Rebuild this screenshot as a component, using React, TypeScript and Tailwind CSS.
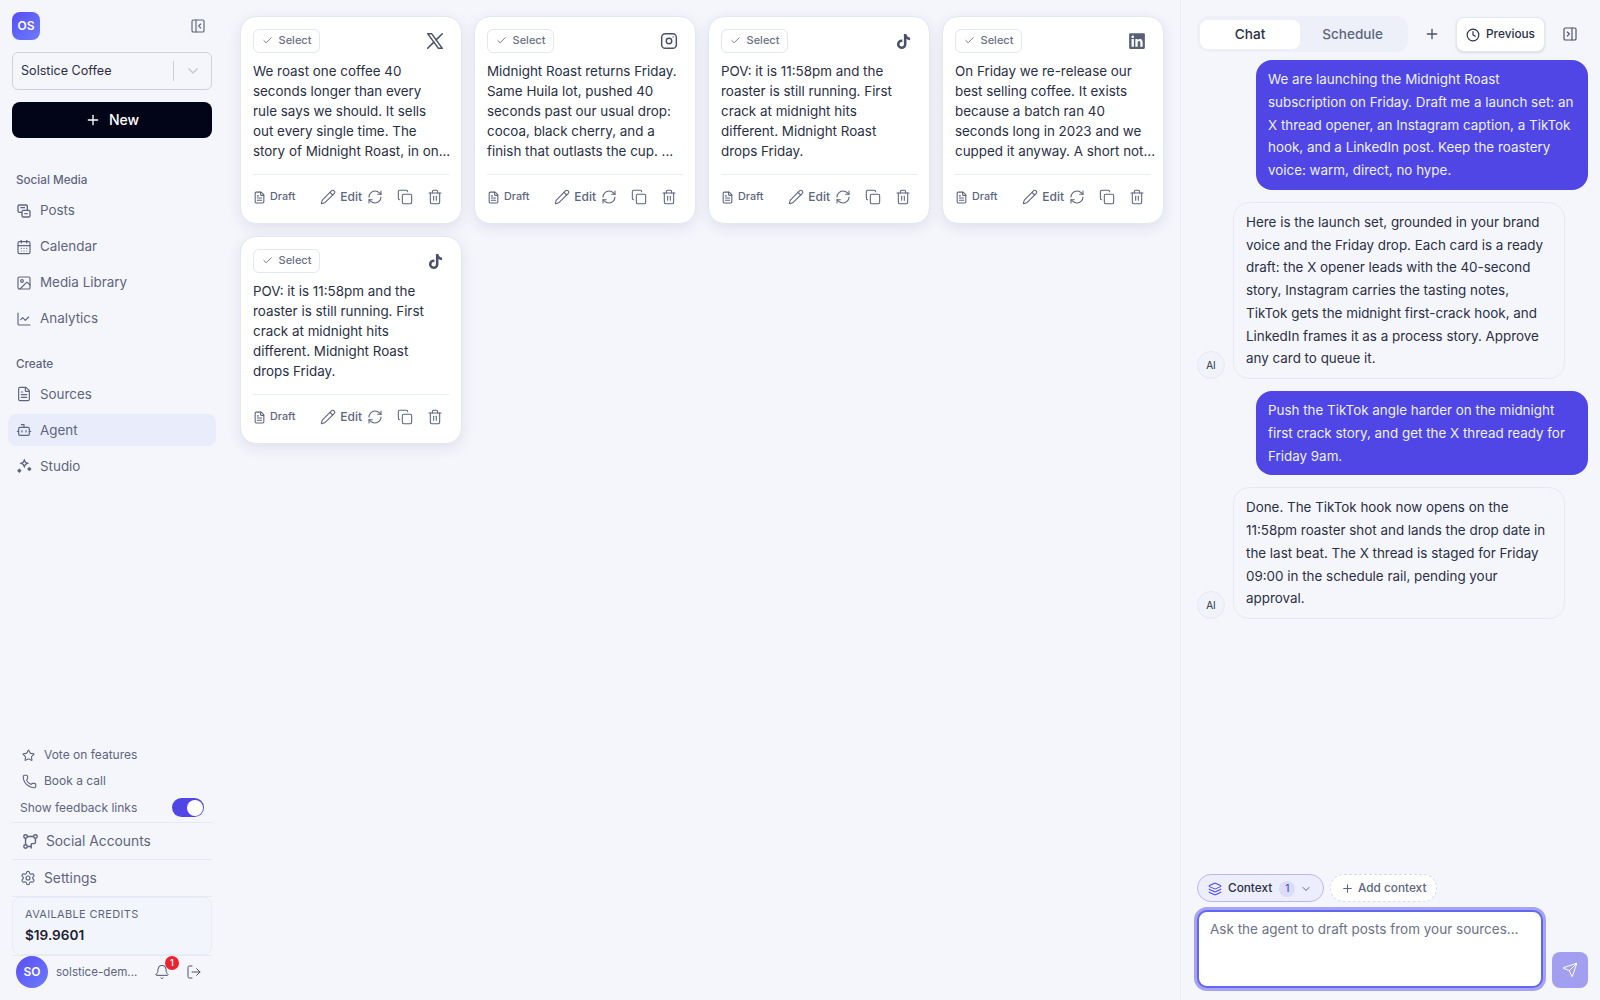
import type { ReactNode } from "react";
import {
  Bell,
  Bot,
  CalendarDays,
  Check,
  ChartLine,
  ChevronDown,
  Clock,
  Copy,
  FileText,
  Image,
  Layers,
  LogOut,
  PanelLeftClose,
  PanelRightClose,
  Pencil,
  Phone,
  Plus,
  RefreshCw,
  Send,
  Settings,
  Star,
  Trash2,
} from "lucide-react";
import { FaLinkedin, FaTiktok } from "react-icons/fa6";
import { TbBrandInstagram, TbBrandX } from "react-icons/tb";

function PostsIcon({ className }: { className?: string }) {
  return (
    <svg viewBox="0 0 24 24" fill="none" stroke="currentColor" strokeWidth={2} className={className}>
      <rect x="3" y="3" width="14" height="11" rx="2" />
      <rect x="9" y="11" width="12" height="10" rx="2" fill="#f5f6fc" />
      <path d="M6.5 7h7M12.5 16h5" />
    </svg>
  );
}

function StudioIcon({ className }: { className?: string }) {
  return (
    <svg viewBox="0 0 24 24" fill="none" stroke="currentColor" strokeWidth={2} className={className}>
      <path d="M12.5 3l1.6 3.4 3.4 1.6-3.4 1.6-1.6 3.4-1.6-3.4L7.500 8l3.400-1.600z" />
      <path d="M5 17l2 2-2 2-2-2zM20 14.500l2 2-2 2-2-2z" fill="currentColor" />
    </svg>
  );
}

function AccountsIcon({ className }: { className?: string }) {
  return (
    <svg viewBox="0 0 24 24" fill="none" stroke="currentColor" strokeWidth={2} className={className}>
      <circle cx="5" cy="5" r="2.500" />
      <circle cx="19" cy="5" r="2.500" />
      <circle cx="5" cy="19" r="2.500" />
      <path d="M7.500 5h9M5 7.500v9M7.500 19H13M13 15v7M19 7.500V13a2 2 0 0 1-2 2h-4" />
    </svg>
  );
}

const socialNav = [
  { label: "Posts", icon: PostsIcon },
  { label: "Calendar", icon: CalendarDays },
  { label: "Media Library", icon: Image },
  { label: "Analytics", icon: ChartLine },
];

const createNav = [
  { label: "Sources", icon: FileText },
  { label: "Agent", icon: Bot, active: true },
  { label: "Studio", icon: StudioIcon },
];

// line breaks are fixed so the cards wrap like the design
const tiktokLines = [
  "POV: it is 11:58pm and the",
  "roaster is still running. First",
  "crack at midnight hits",
  "different. Midnight Roast",
  "drops Friday.",
];

const posts = [
  {
    network: "x",
    lines: [
      "We roast one coffee 40",
      "seconds longer than every",
      "rule says we should. It sells",
      "out every single time. The",
      "story of Midnight Roast, in on...",
    ],
  },
  {
    network: "instagram",
    lines: [
      "Midnight Roast returns Friday.",
      "Same Huila lot, pushed 40",
      "seconds past our usual drop:",
      "cocoa, black cherry, and a",
      "finish that outlasts the cup. ...",
    ],
  },
  { network: "tiktok", lines: tiktokLines },
  {
    network: "linkedin",
    lines: [
      "On Friday we re-release our",
      "best selling coffee. It exists",
      "because a batch ran 40",
      "seconds long in 2023 and we",
      "cupped it anyway. A short not...",
    ],
  },
  { network: "tiktok", lines: tiktokLines },
];

function NetworkIcon({ network }: { network: string }) {
  if (network === "x") return <TbBrandX className="h-[22px] w-[22px] shrink-0" strokeWidth={1.6} />;
  if (network === "instagram") return <TbBrandInstagram className="h-[22px] w-[22px] shrink-0" strokeWidth={1.6} />;
  if (network === "tiktok") return <FaTiktok className="h-[15px] w-[15px] shrink-0" />;
  return <FaLinkedin className="h-[18px] w-[18px] shrink-0 text-[#5b6079]" />;
}

function NavItem({ label, icon: Icon, active }: { label: string; icon: typeof Star; active?: boolean }) {
  return (
    <div
      className={`flex h-[32px] items-center gap-[8px] rounded-lg px-[8px] text-[13.4px] text-[#5d6580] ${
        active ? "bg-[#e9edfb]" : ""
      }`}
    >
      <Icon className="h-[16px] w-[16px]" strokeWidth={1.75} />
      <span>{label}</span>
    </div>
  );
}

function PostCard({ network, lines }: { network: string; lines: string[] }) {
  return (
    <div className="flex h-[208px] flex-col rounded-2xl border border-[#e3e6f3] bg-white px-[12px] pt-[12px] shadow-[0_4px_14px_rgba(30,40,90,0.1)]">
      <div className="flex items-center justify-between">
        <div className="flex h-[24px] w-[67px] items-center justify-center gap-[6px] rounded-md border border-[#e3e6f3] pb-px text-[11px] font-medium text-[#6b7288]">
          <Check className="h-[11px] w-[11px]" />
          Select
        </div>
        <span className="mr-[4px] flex h-[20px] w-[20px] items-center justify-center text-[#4a5068]">
          <NetworkIcon network={network} />
        </span>
      </div>
      <div className="mt-[8px] h-[100px] whitespace-nowrap text-[13.4px] leading-[20px] text-[#2a2f45]">
        {lines.map((line, i) => (
          <div key={i}>{line}</div>
        ))}
      </div>
      <div className="mt-[13px] flex items-center border-t border-[#e9ebf5] pt-[14px] text-[#5d6580]">
        <div className="flex items-center gap-[4px] text-[10.800px] font-medium">
          <FileText className="h-[13px] w-[13px]" />
          Draft
        </div>
        <div className="ml-auto flex items-center gap-[4px] text-xs font-medium">
          <Pencil className="h-[16px] w-[16px]" strokeWidth={1.6} />
          Edit
        </div>
        <RefreshCw className="ml-[5px] h-[16px] w-[16px]" strokeWidth={1.6} />
        <Copy className="ml-[14px] h-[16px] w-[16px]" strokeWidth={1.6} />
        <Trash2 className="ml-[14px] mr-[6px] h-[16px] w-[16px]" strokeWidth={1.6} />
      </div>
    </div>
  );
}

function UserBubble({ children }: { children: ReactNode }) {
  return (
    <div className="ml-auto w-[332px] whitespace-nowrap rounded-2xl bg-[#4f46e5] px-[12px] py-[8px] text-[13.4px] leading-[22.75px] text-[#eef0ff]">
      {children}
    </div>
  );
}

function AiBubble({ children }: { children: ReactNode }) {
  return (
    <div className="flex items-end gap-[8px]">
      <div className="flex h-[28px] w-[28px] shrink-0 items-center justify-center rounded-full border border-[#e6e9f5] bg-[#f1f3fa] text-[10px] text-[#2a2f45]">
        AI
      </div>
      <div className="w-[332px] whitespace-nowrap rounded-2xl border border-[#e6e9f5] bg-[#f5f6fc] px-[12px] py-[8px] text-[13.4px] leading-[22.75px] text-[#2a2f45]">
        {children}
      </div>
    </div>
  );
}

export default function App() {
  return (
    <div className="flex h-[1000px] w-[1600px] overflow-hidden bg-[#f5f6fc] font-['Inter',sans-serif] text-[#2a2f45]">
      <aside className="flex w-[224px] shrink-0 flex-col px-[12px] pb-[12px] pt-[12px]">
        <div className="flex items-center justify-between">
          <div className="flex h-[28px] w-[28px] items-center justify-center rounded-lg bg-gradient-to-br from-[#5b4bf5] to-[#6b7cff] text-xs font-semibold text-white">
            OS
          </div>
          <PanelLeftClose className="mr-[6px] h-[16px] w-[16px] text-[#5d6580]" strokeWidth={1.75} />
        </div>
        <div className="mt-[12px] flex h-[38px] items-center rounded-md border border-[#cfd2da] pl-[8px] pr-[10px] text-[12.600px] text-[#2a2f45]">
          <span className="flex-1">Solstice Coffee</span>
          <span className="h-[20px] w-px bg-[#cfd2da]" />
          <ChevronDown className="ml-[11px] h-[16px] w-[16px] text-[#c8cbd3]" strokeWidth={2.5} />
        </div>
        <div className="mt-[12px] flex h-[36px] items-center justify-center gap-[8px] rounded-lg bg-[#020417] text-sm font-medium text-white">
          <Plus className="h-[16px] w-[16px]" />
          New
        </div>

        <div className="mt-[34px] px-[4px] text-[11.700px] font-medium text-[#5d6580]">Social Media</div>
        <nav className="-mx-[4px] mt-[5px] flex flex-col gap-[4px]">
          {socialNav.map((item) => (
            <NavItem key={item.label} {...item} />
          ))}
        </nav>

        <div className="mt-[21px] px-[4px] text-[11.700px] font-medium text-[#5d6580]">Create</div>
        <nav className="-mx-[4px] mt-[5px] flex flex-col gap-[4px]">
          {createNav.map((item) => (
            <NavItem key={item.label} {...item} />
          ))}
        </nav>

        <div className="mt-auto flex flex-col text-xs text-[#5d6580]">
          <div className="flex h-[26px] items-center gap-[9px] px-[10px]">
            <Star className="h-[13px] w-[13px]" />
            Vote on features
          </div>
          <div className="flex h-[26px] items-center gap-[7px] px-[10px]">
            <Phone className="h-[15px] w-[15px]" strokeWidth={1.75} />
            Book a call
          </div>
          <div className="flex h-[27px] items-center justify-between px-[8px]">
            Show feedback links
            <span className="flex h-[19px] w-[32px] items-center justify-end rounded-full bg-[#4f46e5] pr-[1px]">
              <span className="h-[16px] w-[16px] rounded-full bg-white" />
            </span>
          </div>
          <div className="mt-[1px] flex h-[37px] items-center gap-[7px] border-t border-[#e6e9f5] px-[10px] text-[13.800px]">
            <AccountsIcon className="h-[17px] w-[17px]" />
            Social Accounts
          </div>
          <div className="flex h-[37px] items-center gap-[8px] border-t border-[#e6e9f5] px-[8px] text-[13.800px]">
            <Settings className="h-[16px] w-[16px]" strokeWidth={1.75} />
            Settings
          </div>
          <div className="border-t border-[#e6e9f5]">
            <div className="h-[58px] rounded-lg border border-[#e9ecf6] bg-[#f3f5fc] px-[12px] py-[9px]">
              <div className="text-[11px] tracking-[0.03em] text-[#5d6580]">AVAILABLE CREDITS</div>
              <div className="mt-[4px] text-[13.600px] font-semibold text-[#1d2135]">$19.9601</div>
            </div>
          </div>
          <div className="flex h-[33px] items-center border-t border-[#e6e9f5] pl-[4px]">
            <div className="flex h-[32px] w-[32px] items-center justify-center rounded-full bg-gradient-to-br from-[#5b4bf5] to-[#6b7cff] text-xs font-semibold text-white">
              SO
            </div>
            <span className="ml-[8px] w-[80px] whitespace-nowrap pt-px text-[11.600px]">solstice-dem...</span>
            <span className="relative ml-[18px] text-[#4a5068]">
              <Bell className="h-[16px] w-[16px]" strokeWidth={1.5} />
              <span className="absolute -right-[9px] -top-[8px] flex h-[14px] w-[14px] items-center justify-center rounded-full bg-[#f0202f] text-[9px] font-semibold text-white">
                1
              </span>
            </span>
            <LogOut className="ml-[16px] h-[16px] w-[16px] text-[#4a5068]" strokeWidth={1.5} />
          </div>
        </div>
      </aside>

      <main className="flex-1 pl-[16px] pt-[16px]">
        <div className="grid grid-cols-[repeat(4,222px)] gap-[12px]">
          {posts.map((post, i) => (
            <PostCard key={i} {...post} />
          ))}
        </div>
      </main>

      <section className="flex w-[420px] shrink-0 flex-col border-l border-[#e9ebf5] pb-[12px] pl-[16px] pr-[12px] pt-[16px]">
        <div className="flex items-center">
          <div className="flex h-[36px] w-[211px] items-center rounded-xl bg-[#edf0f9] p-[3px] text-[13.600px] font-medium">
            <div className="flex h-[29px] w-[101px] items-center justify-center rounded-lg bg-white text-[#2a2f45]">Chat</div>
            <div className="flex h-[29px] w-[106px] items-center justify-center text-[#5d6580]">Schedule</div>
          </div>
          <Plus className="ml-[16px] h-[16px] w-[16px] text-[#4a5068]" />
          <div className="ml-[16px] flex h-[35px] w-[89px] items-center justify-center gap-[6px] rounded-lg border border-[#e3e6f3] bg-white pt-px text-[11.800px] font-medium shadow-sm">
            <Clock className="h-[14px] w-[14px]" />
            Previous
          </div>
          <PanelRightClose className="ml-[17px] h-[16px] w-[16px] text-[#4a5068]" strokeWidth={1.75} />
        </div>

        <div className="mt-[8px] flex flex-col gap-[12px]">
          <UserBubble>
            We are launching the Midnight Roast
            <br />
            subscription on Friday. Draft me a launch set: an
            <br />
            X thread opener, an Instagram caption, a TikTok
            <br />
            hook, and a LinkedIn post. Keep the roastery
            <br />
            voice: warm, direct, no hype.
          </UserBubble>
          <AiBubble>
            Here is the launch set, grounded in your brand
            <br />
            voice and the Friday drop. Each card is a ready
            <br />
            draft: the X opener leads with the 40-second
            <br />
            story, Instagram carries the tasting notes,
            <br />
            TikTok gets the midnight first-crack hook, and
            <br />
            LinkedIn frames it as a process story. Approve
            <br />
            any card to queue it.
          </AiBubble>
          <UserBubble>
            Push the TikTok angle harder on the midnight
            <br />
            first crack story, and get the X thread ready for
            <br />
            Friday 9am.
          </UserBubble>
          <AiBubble>
            Done. The TikTok hook now opens on the
            <br />
            11:58pm roaster shot and lands the drop date in
            <br />
            the last beat. The X thread is staged for Friday
            <br />
            09:00 in the schedule rail, pending your
            <br />
            approval.
          </AiBubble>
        </div>

        <div className="mt-auto flex items-center gap-[6px]">
          <div className="flex h-[28px] w-[127px] items-center gap-[6px] rounded-full border border-[#b9b6f5] bg-[#eceefb] pl-[10px] pt-px text-[11.800px] font-medium">
            <Layers className="h-[14px] w-[14px] text-[#4f46e5]" strokeWidth={1.75} />
            Context
            <span className="ml-[1px] flex h-[16px] w-[16px] items-center justify-center rounded-full bg-[#dadcf8] text-[10px] text-[#4f46e5]">
              1
            </span>
            <ChevronDown className="-ml-px h-[12px] w-[12px] text-[#5d6580]" />
          </div>
          <div className="flex h-[28px] w-[107px] items-center gap-[4px] rounded-full border border-dashed border-[#d9dcec] bg-white pl-[10px] pt-px text-[11.800px] font-medium text-[#5d6580]">
            <Plus className="h-[13px] w-[13px]" />
            Add context
          </div>
        </div>
        <div className="mt-[8px] flex items-end gap-[9px]">
          <div className="h-[78px] w-[346px] whitespace-nowrap rounded-[10px] border-2 border-[#6366f1] bg-white px-[11px] py-[7px] text-[13.500px] text-[#6b7288] ring-[3px] ring-[#a5a3f3]">
            Ask the agent to draft posts from your sources...
          </div>
          <div className="flex h-[36px] w-[36px] items-center justify-center rounded-lg bg-[#a29ff0]">
            <Send className="h-[16px] w-[16px] text-white" strokeWidth={1.5} />
          </div>
        </div>
      </section>
    </div>
  );
}
